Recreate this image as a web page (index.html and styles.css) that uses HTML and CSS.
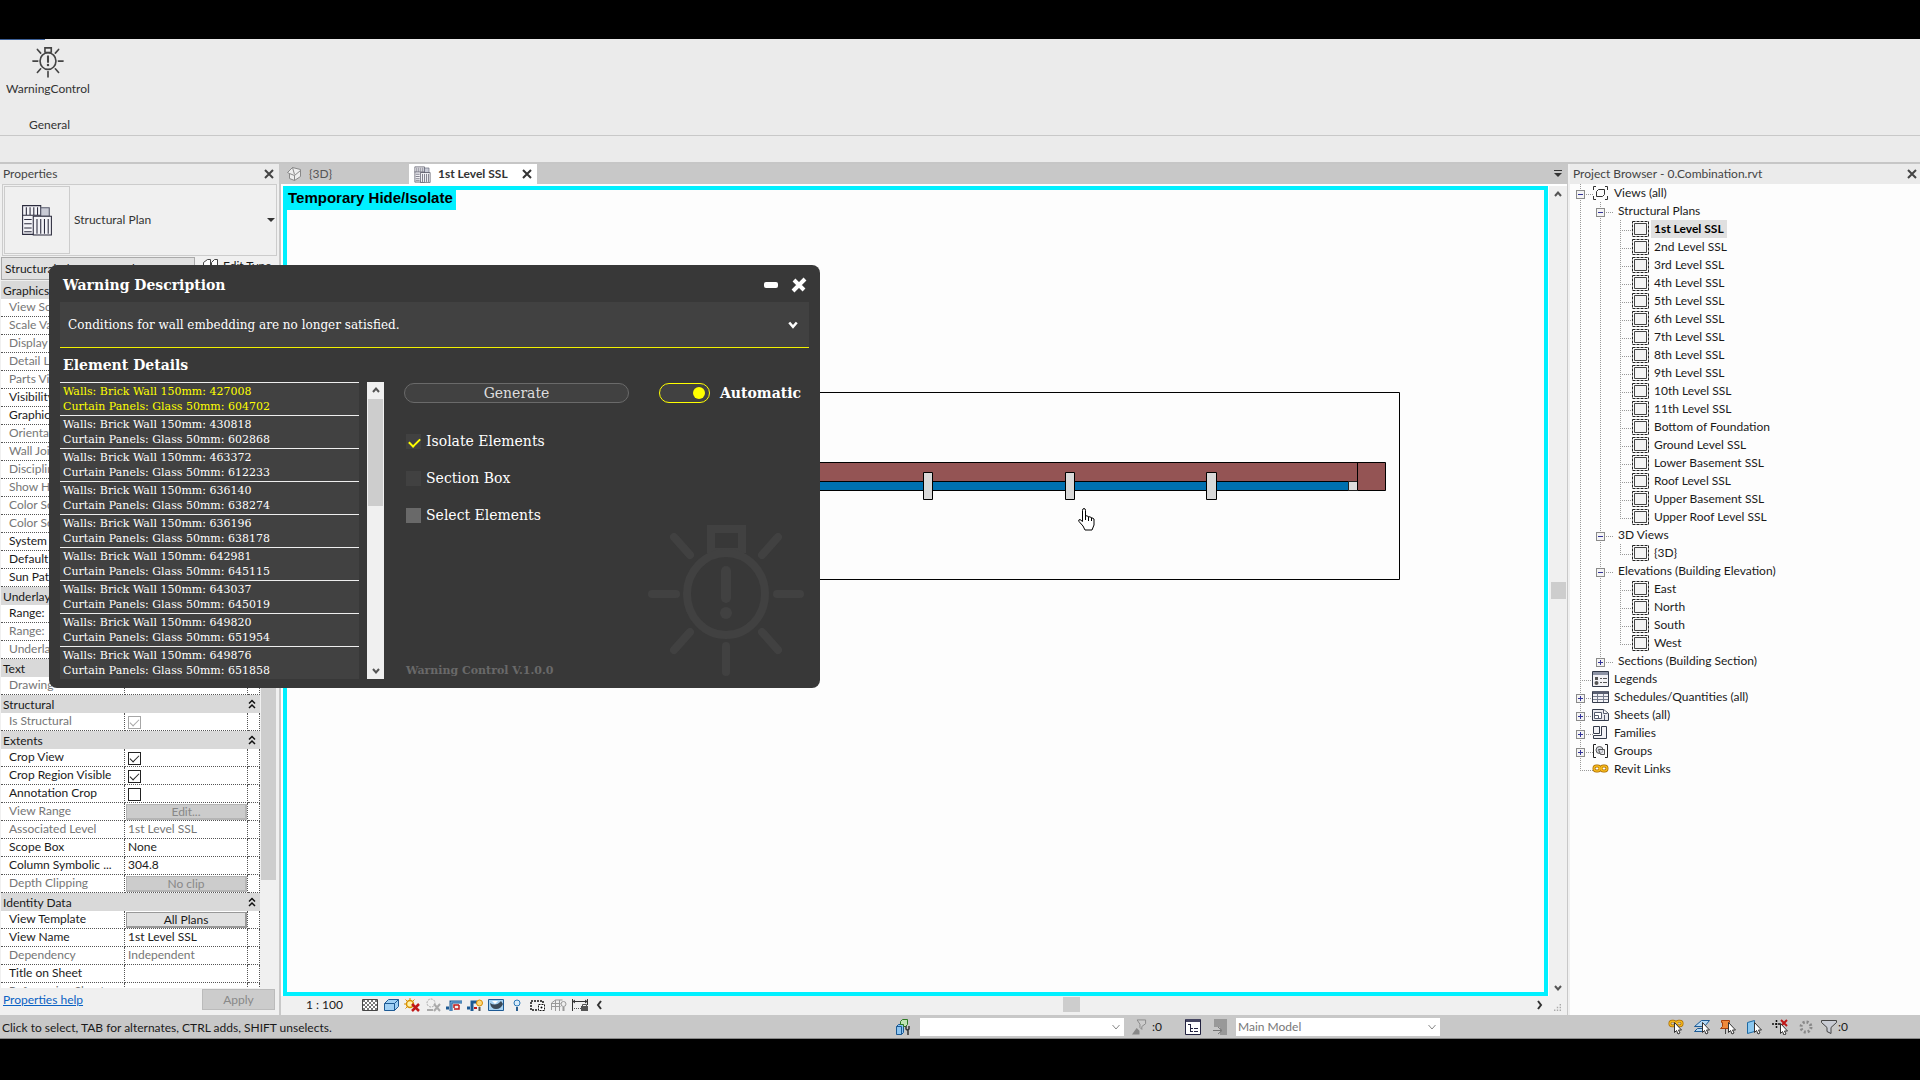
FILE: index.html
```html
<!DOCTYPE html>
<html lang="en">
<head>
  <meta charset="UTF-8" />
  <title>Warning Control</title>
  <link rel="stylesheet" href="styles.css">
</head>
<body>

  <!-- shared icons -->
  <svg class="sprite" aria-hidden="true">
    <symbol id="bulb" viewBox="0 0 156 152">
      <g fill="none" stroke="currentColor" stroke-width="8">
        <path d="M63 28V4h31v24" />
        <path d="M63 27h31" />
        <ellipse cx="78" cy="69" rx="39" ry="41" />
        <path stroke-linecap="round" d="M4 69h24M129 69h23M78 121v26M26 12l16 18M130 12l-16 18M26 125l16-18M130 125l-16-18" />
        <path stroke-width="10" stroke-linecap="round" d="M78 46v27" />
      </g>
      <circle cx="78" cy="88" r="6" fill="currentColor" />
    </symbol>
    <symbol id="plan" viewBox="0 0 28 30">
      <path fill="#f4f4f8" stroke="#2b2b3d" d="M.5 1.500h17v27H.500z" />
      <path fill="#c9cbd6" stroke="#55586a" d="M17.500 3.500h8v8h-8z" />
      <path fill="#f4f4f8" stroke="#2b2b3d" d="M10.500 11.500h17v17.500h-17z" />
      <path stroke="#2b2b3d" d="M4 3v7M7.500 3v7M11 3v7M14.500 3v7M2 14.500h7M2 18.500h7M2 22.500h7M2 26h7M0 10.500h17M14 14v14M17.500 14v14M21 14v14M24.500 14v14" />
    </symbol>
    <symbol id="view" viewBox="0 0 17 16">
      <path fill="none" stroke="#222" stroke-dasharray="3 1" d="M.5.5h16v15H.5z" />
      <path fill="#f3f3f3" stroke="#444" d="M2.500 2.500h12v11h-12z" />
    </symbol>
    <symbol id="x" viewBox="0 0 10 10">
      <path fill="none" stroke="currentColor" stroke-width="2" d="M1 1l8 8M9 1l-8 8" />
    </symbol>
    <symbol id="down" viewBox="0 0 8 8">
      <path fill="none" stroke="currentColor" stroke-width="2" d="M1 2l3 3.500 3-3.500" />
    </symbol>
    <symbol id="up" viewBox="0 0 8 8">
      <path fill="none" stroke="currentColor" stroke-width="2" d="M1 6l3-3.500 3 3.500" />
    </symbol>
    <symbol id="drop" viewBox="0 0 8 8">
      <path fill="none" stroke="#888" d="M.5 2l3.500 4 3.500-4" />
    </symbol>
    <symbol id="fold" viewBox="0 0 8 10">
      <path fill="none" stroke="#111" stroke-width="1.500" d="M1 4.500l3-3 3 3M1 9l3-3 3 3" />
    </symbol>
    <symbol id="arrow" viewBox="0 0 16 16">
      <path fill="#fff" stroke="#333" d="M6.500 3.500v10l2-2 1.500 3.500 2-1-1.500-3h3z" />
    </symbol>
    <symbol id="chain" viewBox="0 0 17 10">
      <g fill="none" stroke="#a86a00" stroke-width="3">
        <rect x="2" y="2" width="6" height="5" rx="2.500" />
        <rect x="9" y="2" width="6" height="5" rx="2.500" />
      </g>
      <g fill="none" stroke="#f5b81c" stroke-width="1.500">
        <rect x="2" y="2" width="6" height="5" rx="2.500" />
        <rect x="9" y="2" width="6" height="5" rx="2.500" />
        <path d="M6 4.500h5" />
      </g>
    </symbol>
  </svg>

  <header class="ribbon">
    <button type="button" class="ribbon-button">
      <svg class="ribbon-icon"><use href="#bulb" /></svg>
      WarningControl
    </button>
    <div class="ribbon-group">General</div>
  </header>

  <main class="workspace">

    <section class="properties">
      <div class="panel-title">
        <span>Properties</span>
        <button type="button" class="icon-button" aria-label="Close properties"><svg class="close"><use href="#x" /></svg></button>
      </div>

      <div class="type-selector">
        <div class="type-image"><svg width="30" height="32"><use href="#plan" /></svg></div>
        <span>Structural Plan</span>
        <button type="button" class="icon-button type-arrow" aria-label="Change type"></button>
      </div>

      <div class="filter-row">
        <select class="filter" aria-label="Element filter"><option>Structural Plan: 1st Level SSL</option></select>
        <button type="button" class="edit-type">
          <svg width="16" height="16" fill="#fff" stroke="#444"><path d="M1.500 4.500l4-3h3v8l-4 3h-3zM9.500 4.500l3-3h3v8l-3 3h-3z" /></svg>
          Edit Type
        </button>
      </div>

      <div class="grid-scroll">
        <table class="props">
          <colgroup><col class="name"><col class="value"><col class="extra"></colgroup>
          <tr class="group"><th colspan="2">Graphics</th><th><svg><use href="#fold" /></svg></th></tr>
          <tr class="off"><td>View Scale</td><td></td><td></td></tr>
          <tr class="off"><td>Scale Value</td><td></td><td></td></tr>
          <tr class="off"><td>Display</td><td></td><td></td></tr>
          <tr class="off"><td>Detail Level</td><td></td><td></td></tr>
          <tr class="off"><td>Parts Visibility</td><td></td><td></td></tr>
          <tr><td>Visibility</td><td></td><td></td></tr>
          <tr><td>Graphic</td><td></td><td></td></tr>
          <tr class="off"><td>Orientation</td><td></td><td></td></tr>
          <tr class="off"><td>Wall Join</td><td></td><td></td></tr>
          <tr class="off"><td>Discipline</td><td></td><td></td></tr>
          <tr class="off"><td>Show Hidden</td><td></td><td></td></tr>
          <tr class="off"><td>Color Scheme</td><td></td><td></td></tr>
          <tr class="off"><td>Color Scheme</td><td></td><td></td></tr>
          <tr><td>System</td><td></td><td></td></tr>
          <tr><td>Default</td><td></td><td></td></tr>
          <tr><td>Sun Path</td><td></td><td></td></tr>
          <tr class="group"><th colspan="2">Underlay</th><th><svg><use href="#fold" /></svg></th></tr>
          <tr><td>Range:</td><td></td><td></td></tr>
          <tr class="off"><td>Range:</td><td></td><td></td></tr>
          <tr class="off"><td>Underlay</td><td></td><td></td></tr>
          <tr class="group"><th colspan="2">Text</th><th><svg><use href="#fold" /></svg></th></tr>
          <tr class="off"><td>Drawing</td><td></td><td></td></tr>
          <tr class="group"><th colspan="2">Structural</th><th><svg><use href="#fold" /></svg></th></tr>
          <tr class="off"><td><label for="is-structural">Is Structural</label></td><td><input type="checkbox" id="is-structural" checked disabled></td><td></td></tr>
          <tr class="group"><th colspan="2">Extents</th><th><svg><use href="#fold" /></svg></th></tr>
          <tr><td><label for="crop-view">Crop View</label></td><td><input type="checkbox" id="crop-view" checked></td><td></td></tr>
          <tr><td><label for="crop-region">Crop Region Visible</label></td><td><input type="checkbox" id="crop-region" checked></td><td></td></tr>
          <tr><td><label for="annotation">Annotation Crop</label></td><td><input type="checkbox" id="annotation"></td><td></td></tr>
          <tr class="off"><td>View Range</td><td class="cell-button"><button type="button" disabled>Edit...</button></td><td></td></tr>
          <tr class="off"><td>Associated Level</td><td>1st Level SSL</td><td></td></tr>
          <tr><td>Scope Box</td><td>None</td><td></td></tr>
          <tr><td>Column Symbolic ...</td><td>304.8</td><td></td></tr>
          <tr class="off"><td>Depth Clipping</td><td class="cell-button"><button type="button" disabled>No clip</button></td><td></td></tr>
          <tr class="group"><th colspan="2">Identity Data</th><th><svg><use href="#fold" /></svg></th></tr>
          <tr><td>View Template</td><td class="cell-button"><button type="button">All Plans</button></td><td></td></tr>
          <tr><td>View Name</td><td>1st Level SSL</td><td></td></tr>
          <tr class="off"><td>Dependency</td><td>Independent</td><td></td></tr>
          <tr><td>Title on Sheet</td><td></td><td></td></tr>
          <tr class="off"><td>Referencing Sheet</td><td></td><td></td></tr>
        </table>
        <div class="scrollbar">
          <svg><use href="#up" /></svg>
          <div class="thumb props-thumb"></div>
          <svg><use href="#down" /></svg>
        </div>
      </div>

      <div class="properties-footer">
        <a href="#">Properties help</a>
        <button type="button" class="apply" disabled>Apply</button>
      </div>
    </section>

    <section class="editor">
      <nav class="tabs">
        <a href="#" class="tab">
          <svg width="16" height="16" fill="#eee" stroke="#888"><path d="M1.500 6.500l5-5 8 2v7l-6 4-5-2v-5zM3.500 7.500l5 2v5M8.500 9.500l6-5M6.500 1.500l2 7" /></svg>
          {3D}
        </a>
        <a href="#" class="tab active">
          <svg width="17" height="17"><use href="#plan" /></svg>
          1st Level SSL
          <svg class="close"><use href="#x" /></svg>
        </a>
        <button type="button" class="icon-button tab-menu" aria-label="Open views">
          <svg width="8" height="8" fill="#333"><path d="M0 0h8v1H0zM0 3h8L4 7z" /></svg>
        </button>
      </nav>

      <div class="view-area">
        <div class="view">
          <span class="mode">Temporary Hide/Isolate</span>
          <svg class="drawing" viewBox="0 0 1257 802">
            <path fill="none" stroke="#000" d="M100.500 202.500h1012v187h-1012z" />
            <path fill="#945454" stroke="#000" d="M120.500 272.500h978v28h-978z" />
            <path fill="#0070b0" stroke="#000" d="M120.500 291.500h950v9h-950z" />
            <path fill="#ddd" stroke="#222" d="M1061.500 291.500h9v9h-9z" />
            <path stroke="#000" d="M1070.500 272v28" />
            <g fill="#d9d9d9" stroke="#000">
              <path d="M636.500 282.500h9v27h-9z" />
              <path d="M778.500 282.500h9v27h-9z" />
              <path d="M919.500 282.500h10v27h-10z" />
            </g>
            <path fill="#fff" stroke="#000" d="M795.500 331.500v-11q0-2 1.500-2t1.500 2v5l3 1 3 1 2.500 1.500v6l-2 5h-7l-2-4-4-4.500q-1-2 1-2z" />
            <path stroke="#000" d="M798.500 325v5M801.500 327v4M804.500 328v3" />
          </svg>
        </div>
        <div class="scrollbar">
          <svg><use href="#up" /></svg>
          <div class="thumb view-thumb"></div>
          <svg><use href="#down" /></svg>
        </div>
      </div>

      <div class="view-bar">
        <span class="scale">1 : 100</span>
        <div class="view-icons">
          <!-- detail level -->
          <svg viewBox="0 0 16 14"><path fill="#fff" stroke="#444" d="M.5 1.500h15v11H.5z" /><path stroke="#777" stroke-dasharray="2 2" stroke-width="2" d="M1 3h14M3 5h12M1 7h14M3 9h12M1 11h14" /></svg>
          <!-- visual style -->
          <svg viewBox="0 0 16 14"><path fill="#9fd0f5" stroke="#1d5a94" d="M1.500 5.500l4-4h10v7l-4 4h-10zM1.500 5.500h10v7M11.500 5.500l4-4" /></svg>
          <!-- sun path -->
          <svg viewBox="0 0 16 14"><circle cx="6" cy="6" r="3.500" fill="#fff2a8" stroke="#d89000" stroke-width="1.500" /><path stroke="#d89000" d="M6 0v2M0 6h2M1.500 1.500l1.500 1.500M10.500 1.500l-1.500 1.500M1.500 10.500l1.500-1.500" /><path stroke="#c01818" stroke-width="2.500" d="M8 6l7 7M15 6l-7 7" /></svg>
          <!-- shadows -->
          <svg viewBox="0 0 16 14"><circle cx="6" cy="5" r="4" fill="none" stroke="#aaa" stroke-dasharray="2 1" /><path stroke="#aaa" stroke-width="2" d="M9 6l6 7M15 6l-6 7M2 12h6" /></svg>
          <!-- crop view -->
          <svg viewBox="0 0 16 14"><path fill="none" stroke="#1d5a94" stroke-width="3" d="M5 13V4h11M0 10h3" /><path fill="none" stroke="#7fb8e8" d="M5 13V4h11" /><path fill="none" stroke="#c01818" stroke-width="1.500" d="M8 10V7h5M8 11h5V7" /></svg>
          <!-- crop region -->
          <svg viewBox="0 0 16 14"><path fill="none" stroke="#1d5a94" stroke-width="3" d="M5 13V4h5M0 10h3" /><path stroke="#c01818" stroke-width="2" d="M7 10h3" /><circle cx="12.500" cy="5" r="3" fill="#ffd978" stroke="#d88a00" /><path stroke="#555" stroke-width="2" d="M12.500 9v4" /></svg>
          <!-- render -->
          <svg viewBox="0 0 16 14"><path fill="#a8d2f2" stroke="#1d5a94" d="M.5 1.500h15v11H.5z" /><path fill="#3c4a58" d="M2 5q6 4 11-2l2 3q-2 5-7 5T2 5z" /><path fill="#fff" d="M4 3h6l-3 3z" /></svg>
          <!-- reveal hidden -->
          <svg viewBox="0 0 16 14"><circle cx="8" cy="5" r="3" fill="#d8ecfb" stroke="#2a78b8" /><path stroke="#2a5f90" stroke-width="2" d="M8 9v4" /></svg>
          <!-- temporary hide -->
          <svg viewBox="0 0 16 14"><path fill="none" stroke="#111" stroke-width="1.500" stroke-dasharray="2 1" d="M7 12H1V3h12v3" /><rect x="8.500" y="6.500" width="6" height="6" fill="#fff" stroke="#111" stroke-dasharray="2 1" /><circle cx="11.500" cy="9.500" r="1" /></svg>
          <!-- analytical model -->
          <svg viewBox="0 0 16 14"><path fill="none" stroke="#999" d="M.5 12V5l4-3h7M.5 5.500h9M.5 8.500h9M4.500 2v11M8.500 2v11" /><circle cx="12.500" cy="6" r="2.500" fill="#eee" stroke="#999" /><path stroke="#999" stroke-width="2" d="M12.500 9v4" /></svg>
          <!-- constraints -->
          <svg viewBox="0 0 16 14"><path fill="none" stroke="#333" d="M.5 1v12M15.500 1v6M1 3.500h14M3 2L1 3.500 3 5M13 2l2 1.500L13 5" /><path stroke="#555" stroke-dasharray="1 1" d="M2 10.500h7" /><path fill="#555" d="M9 8h7v5H9z" /><path fill="none" stroke="#555" d="M10.500 8V6.500h4V8" /></svg>
          <svg viewBox="0 0 16 14"><path fill="none" stroke="#333" stroke-width="2" d="M8 3L5 7l3 4" /></svg>
        </div>
        <div class="h-scroll">
          <div class="thumb h-thumb"></div>
        </div>
        <svg class="h-arrow" viewBox="0 0 8 10"><path fill="none" stroke="#333" stroke-width="2" d="M2 1l3 4-3 4" /></svg>
        <svg class="grip" viewBox="0 0 10 10"><path fill="#aaa" d="M8 0h2v2H8zM4 4h2v2H4zM8 4h2v2H8zM0 8h2v2H0zM4 8h2v2H4zM8 8h2v2H8z" /></svg>
      </div>
    </section>

    <section class="browser">
      <div class="panel-title">
        <span>Project Browser - 0.Combination.rvt</span>
        <button type="button" class="icon-button" aria-label="Close project browser"><svg class="close"><use href="#x" /></svg></button>
      </div>
      <ul class="tree">
        <li>
          <div class="node"><button type="button" class="toggle" aria-label="Collapse"></button>
            <svg viewBox="0 0 17 16" fill="none" stroke="#333"><path d="M4 1.500H1.500V5M13 1.500h2.500V5M4 14.500H1.500V11M13 14.500h2.500V11" /><path d="M4.500 6.500l2-2h6v5l-2 2h-6z" /></svg>
            <span>Views (all)</span></div>
          <ul>
            <li>
              <div class="node"><button type="button" class="toggle" aria-label="Collapse"></button><span>Structural Plans</span></div>
              <ul class="views">
                <li><svg><use href="#view" /></svg><span class="current">1st Level SSL</span></li>
                <li><svg><use href="#view" /></svg><span>2nd Level SSL</span></li>
                <li><svg><use href="#view" /></svg><span>3rd Level SSL</span></li>
                <li><svg><use href="#view" /></svg><span>4th Level SSL</span></li>
                <li><svg><use href="#view" /></svg><span>5th Level SSL</span></li>
                <li><svg><use href="#view" /></svg><span>6th Level SSL</span></li>
                <li><svg><use href="#view" /></svg><span>7th Level SSL</span></li>
                <li><svg><use href="#view" /></svg><span>8th Level SSL</span></li>
                <li><svg><use href="#view" /></svg><span>9th Level SSL</span></li>
                <li><svg><use href="#view" /></svg><span>10th Level SSL</span></li>
                <li><svg><use href="#view" /></svg><span>11th Level SSL</span></li>
                <li><svg><use href="#view" /></svg><span>Bottom of Foundation</span></li>
                <li><svg><use href="#view" /></svg><span>Ground Level SSL</span></li>
                <li><svg><use href="#view" /></svg><span>Lower Basement SSL</span></li>
                <li><svg><use href="#view" /></svg><span>Roof Level SSL</span></li>
                <li><svg><use href="#view" /></svg><span>Upper Basement SSL</span></li>
                <li><svg><use href="#view" /></svg><span>Upper Roof Level SSL</span></li>
              </ul>
            </li>
            <li>
              <div class="node"><button type="button" class="toggle" aria-label="Collapse"></button><span>3D Views</span></div>
              <ul class="views">
                <li><svg><use href="#view" /></svg><span>{3D}</span></li>
              </ul>
            </li>
            <li>
              <div class="node"><button type="button" class="toggle" aria-label="Collapse"></button><span>Elevations (Building Elevation)</span></div>
              <ul class="views">
                <li><svg><use href="#view" /></svg><span>East</span></li>
                <li><svg><use href="#view" /></svg><span>North</span></li>
                <li><svg><use href="#view" /></svg><span>South</span></li>
                <li><svg><use href="#view" /></svg><span>West</span></li>
              </ul>
            </li>
            <li>
              <div class="node"><button type="button" class="toggle closed" aria-label="Expand"></button><span>Sections (Building Section)</span></div>
            </li>
          </ul>
        </li>
        <li>
          <div class="node leaf">
            <svg viewBox="0 0 17 16"><path fill="#f2f2f6" stroke="#333a4a" d="M.5.5h16v15H.5z" /><path fill="#8d93a5" d="M1 1h15v3H1z" /><path fill="#555" d="M3 6h3v3H3zM8 7h2v1H8zM11 7h4v1h-4zM8 11h2v1H8zM11 11h4v1h-4z" /><circle cx="4.500" cy="12" r="2" fill="#555" /></svg>
            <span>Legends</span></div>
        </li>
        <li>
          <div class="node"><button type="button" class="toggle closed" aria-label="Expand"></button>
            <svg viewBox="0 0 17 16"><path fill="#f2f2f6" stroke="#333a4a" d="M.5 2.500h16v11H.5z" /><path fill="#5a6072" d="M1 2h15v3H1z" /><path stroke="#777d8e" d="M1 7.500h15M1 10.500h15M5.500 5v8M11.500 5v8" /></svg>
            <span>Schedules/Quantities (all)</span></div>
        </li>
        <li>
          <div class="node"><button type="button" class="toggle closed" aria-label="Expand"></button>
            <svg viewBox="0 0 17 16"><path fill="#e9eaf0" stroke="#333a4a" d="M.5 2.500h11l5 4v7H.5z" /><path fill="#fff" stroke="#555b6e" d="M2.500 5.500h7v6h-7zM2.500 8.500h4v3M11.500 2.500v4h4M12.500 8v5" /></svg>
            <span>Sheets (all)</span></div>
        </li>
        <li>
          <div class="node"><button type="button" class="toggle closed" aria-label="Expand"></button>
            <svg viewBox="0 0 17 16"><path fill="#f2f2f6" stroke="#333a4a" d="M1.500 1.500h6v7h-6zM9.500 1.500h5v12h-13v-3h8z" /></svg>
            <span>Families</span></div>
        </li>
        <li>
          <div class="node"><button type="button" class="toggle closed" aria-label="Expand"></button>
            <svg viewBox="0 0 17 16"><path fill="none" stroke="#222" d="M4 1.500H1.500v13H4M13 1.500h2.500v13H13" /><circle cx="7.500" cy="7" r="3.500" fill="#d5d8e0" stroke="#555" /><path fill="#e8eaf0" fill-opacity=".6" stroke="#555" d="M6.500 6.500h6v5h-4z" /></svg>
            <span>Groups</span></div>
        </li>
        <li>
          <div class="node leaf">
            <svg viewBox="0 -3 17 16"><use href="#chain" width="17" height="10" /></svg>
            <span>Revit Links</span></div>
        </li>
      </ul>
    </section>
  </main>

  <footer class="status">
    <span class="hint">Click to select, TAB for alternates, CTRL adds, SHIFT unselects.</span>
    <div class="status-middle">
      <svg viewBox="0 0 16 18"><path fill="#8cc4f0" stroke="#1d5a94" d="M.5 8.500l2-2h5v8l-2 2h-5zM.5 8.500h5v8" /><path fill="#bfe3b4" stroke="#2d7a22" d="M4.500 3.500l2-2h5v5l-2 2h-2v-2h-3z" /><path fill="none" stroke="#333" stroke-width="1.500" d="M10 8v3q1 2 3 0V8M12 12v5" /></svg>
      <div class="status-select">
        <select aria-label="Active workset"><option></option></select>
        <svg><use href="#drop" /></svg>
      </div>
      <svg viewBox="0 0 17 18"><path fill="#ccc" stroke="#888" d="M6.500 1.500h9v4l-4 3v3l-2-2V6z" /><path fill="#888" d="M1 17l5-7 3 3v4z" /></svg>
      <span class="count">:0</span>
      <svg class="option-icon" viewBox="0 0 16 18"><path fill="#fff" stroke="#222240" d="M.5 1.500h15v15H.5z" /><path fill="#444460" d="M1 1h14v3H1z" /><path stroke="#222240" d="M3 6.500h3M5.500 7v7M6 10.500h2M6 13.500h2M9 10.500h4M9 13.500h4" /></svg>
      <svg viewBox="0 0 16 18"><path fill="#999" d="M2 1h13v16H8V9H2z" /><path fill="none" stroke="#777" d="M1 12.500h8M6 9l4 3.500L6 16" /></svg>
      <div class="status-select">
        <select aria-label="Design option"><option>Main Model</option></select>
        <svg><use href="#drop" /></svg>
      </div>
    </div>
    <div class="status-right">
      <svg viewBox="0 0 16 16"><use href="#chain" width="16" height="10" /><use href="#arrow" width="16" height="16" /></svg>
      <svg viewBox="0 0 16 16"><path fill="#b5d9f5" stroke="#1d5a94" d="M.5 7.500l7-6h8l-5 6zM.5 12.500l3-3h9l-3 3z" /><use href="#arrow" x="2" width="16" height="16" /></svg>
      <svg viewBox="0 0 16 16"><path fill="#f08a3c" stroke="#a8400c" d="M1.500 1.500h8v2h-1v4l2 2h-10l2-2v-4h-1z" /><path stroke="#444" d="M5.500 10v5" /><use href="#arrow" x="2" width="16" height="16" /></svg>
      <svg viewBox="0 0 16 16"><path fill="#8cc8f0" stroke="#1d6aa4" d="M1.500 3.500l7-2v11l-7 2z" /><use href="#arrow" x="2" width="16" height="16" /></svg>
      <svg viewBox="0 0 16 16"><path stroke="#111" stroke-width="1.500" stroke-dasharray="2 1" d="M0 5h9M4.500 1v8" /><path stroke="#c01818" stroke-width="2" d="M9 1l6 6M15 1L9 7" /><use href="#arrow" x="2" y="1" width="16" height="16" /></svg>
      <svg viewBox="0 0 16 16"><circle cx="8" cy="8" r="5" fill="none" stroke="#888" stroke-width="3" stroke-dasharray="2 1.920" /></svg>
      <span class="filter-count">
        <svg viewBox="0 0 16 16"><path fill="#c9ccd4" stroke="#444" d="M.5 1.500h15v2l-5.500 5v6l-4-2v-4L.5 3.500z" /></svg>:0
      </span>
    </div>
  </footer>

  <section class="dialog" role="dialog" aria-label="Warning Description">
    <div class="dialog-head">
      <h2>Warning Description</h2>
      <button type="button" class="icon-button" aria-label="Minimize"><svg width="14" height="18"><rect y="7" width="14" height="6" rx="2" fill="#fff" /></svg></button>
      <button type="button" class="icon-button" aria-label="Close"><svg width="16" height="18"><path stroke="#fff" stroke-width="4" d="M2 16L14 4M3 5l10 10" /></svg></button>
    </div>

    <div class="warning-select">
      <select aria-label="Warning"><option>Conditions for wall embedding are no longer satisfied.</option></select>
      <svg><use href="#down" /></svg>
    </div>

    <div class="dialog-body">
      <h2 class="list-title">Element Details</h2>
      <div class="list-box">
        <ul class="elements">
          <li class="selected">Walls: Brick Wall 150mm: 427008<br>Curtain Panels: Glass 50mm: 604702</li>
          <li>Walls: Brick Wall 150mm: 430818<br>Curtain Panels: Glass 50mm: 602868</li>
          <li>Walls: Brick Wall 150mm: 463372<br>Curtain Panels: Glass 50mm: 612233</li>
          <li>Walls: Brick Wall 150mm: 636140<br>Curtain Panels: Glass 50mm: 638274</li>
          <li>Walls: Brick Wall 150mm: 636196<br>Curtain Panels: Glass 50mm: 638178</li>
          <li>Walls: Brick Wall 150mm: 642981<br>Curtain Panels: Glass 50mm: 645115</li>
          <li>Walls: Brick Wall 150mm: 643037<br>Curtain Panels: Glass 50mm: 645019</li>
          <li>Walls: Brick Wall 150mm: 649820<br>Curtain Panels: Glass 50mm: 651954</li>
          <li>Walls: Brick Wall 150mm: 649876<br>Curtain Panels: Glass 50mm: 651858</li>
        </ul>
        <div class="scrollbar">
          <svg><use href="#up" /></svg>
          <div class="thumb list-thumb"></div>
          <svg><use href="#down" /></svg>
        </div>
      </div>

      <div class="controls">
        <div class="run-row">
          <button type="button" class="generate">Generate</button>
          <input type="checkbox" class="switch" id="automatic" checked>
          <label for="automatic">Automatic</label>
        </div>
        <div class="options">
          <label><input type="checkbox" checked> Isolate Elements</label>
          <label><input type="checkbox"> Section Box</label>
          <label><input type="checkbox" class="light"> Select Elements</label>
        </div>
        <div class="about">
          <span>Warning Control V.1.0.0</span>
          <svg class="watermark"><use href="#bulb" /></svg>
        </div>
      </div>
    </div>
  </section>

</body>
</html>
```
FILE: styles.css
```css
* {
  box-sizing: border-box;
}

body {
  margin: 0;
  height: 100vh;
  padding: 39px 0 41px;
  display: flex;
  flex-direction: column;
  overflow: hidden;
  background: #000;
  color: #1a1a1a;
  font: 12px/18px Lato, "Open Sans", sans-serif;
}

ul {
  list-style: none;
  margin: 0;
  padding: 0;
}

button,
select,
input {
  margin: 0;
  padding: 0;
  border: 0;
  border-radius: 0;
  background: none;
  color: inherit;
  font: inherit;
}

select,
input[type="checkbox"] {
  appearance: none;
}

svg {
  display: block;
  flex: none;
}

.sprite {
  position: absolute;
  width: 0;
  height: 0;
}

.icon-button {
  display: flex;
  align-items: center;
  justify-content: center;
}

.close {
  width: 10px;
  height: 10px;
}

/* ribbon */
.ribbon {
  height: 125px;
  background: linear-gradient(#3c5f96, #3c5f96) 0 0 / 45px 1px no-repeat, #ebebeb;
  border-bottom: 2px solid #c6c6c6;
}

.ribbon-button {
  display: flex;
  flex-direction: column;
  align-items: center;
  gap: 2px;
  padding: 8px 6px 0;
  color: #333;
}

.ribbon-icon {
  width: 32px;
  height: 31px;
  color: #444;
}

.ribbon-group {
  width: 100%;
  padding: 18px 29px 1px;
  border-bottom: 1px solid #c8c8c8;
  color: #333;
}

/* workspace */
.workspace {
  flex: 1;
  min-height: 0;
  display: grid;
  grid-template-columns: 281px 1fr 353px;
  background: #c8c8c8;
}

.panel-title {
  height: 20px;
  padding: 0 3px;
  display: flex;
  justify-content: space-between;
  align-items: center;
  background: #ebebeb;
  color: #444;
}

.properties {
  display: flex;
  flex-direction: column;
  min-height: 0;
  background: #f0f0f0;
  border-right: 2px solid #c8c8c8;
}

.properties .panel-title {
  padding-right: 5px;
}

.type-selector {
  height: 72px;
  margin: 0 2px 1px;
  border: 1px solid #ccc;
  display: flex;
  align-items: center;
  color: #333;
}

.type-image {
  width: 66px;
  height: 68px;
  margin: 0 4px 0 1px;
  border: 1px solid #ccc;
  display: flex;
  align-items: center;
  justify-content: center;
}

.type-arrow {
  margin: 0 1px 0 auto;
  border: 4px solid transparent;
  border-top-color: #333;
  border-bottom: 0;
}

.filter-row {
  height: 24px;
  display: flex;
  align-items: flex-start;
}

.filter {
  width: 194px;
  height: 23px;
  margin-left: 1px;
  padding-left: 3px;
  border: 1px solid #aaa;
  background: #e1e1e1;
}

.edit-type {
  display: flex;
  align-items: center;
  gap: 5px;
  margin-left: 7px;
}

.grid-scroll {
  flex: 1;
  min-height: 0;
  overflow: hidden;
  display: grid;
  grid-template-columns: 259px 17px;
  padding-left: 1px;
}

.props {
  width: 100%;
  align-self: start;
  table-layout: fixed;
  border-collapse: separate;
  border-spacing: 0;
  background: #fff;
  line-height: 16px;
}

.props .name { width: 124px; }
.props .extra { width: 12px; }

.props td,
.props th {
  height: 18px;
  padding: 0 0 1px 3px;
  overflow: hidden;
  text-align: left;
  font-weight: normal;
  white-space: nowrap;
}

.props td {
  border-bottom: 1px dotted #555;
  border-right: 1px dotted #555;
}

.props td:first-child {
  padding-left: 8px;
}

.props .group {
  background: #d9d9d9;
}

.props th:first-child {
  padding: 1px 0 0 2px;
}

.props th:last-child {
  padding: 0;
}

.props th svg {
  width: 8px;
  height: 10px;
}

.props .off {
  color: #767676;
}

.props input {
  display: block;
  width: 13px;
  height: 13px;
  margin-top: 2px;
  border: 1px solid #222;
  background: #fff;
}

.props input:checked::before {
  content: "";
  display: block;
  width: 8px;
  height: 4px;
  margin: 2px 1px;
  border: solid #222;
  border-width: 0 0 1px 1px;
  transform: rotate(-45deg);
}

.props input:disabled {
  opacity: 0.4;
}

.props .cell-button {
  padding: 0 0 0 1px;
}

.props td button {
  display: block;
  width: 100%;
  height: 16px;
  border: 1px solid #999;
  border-width: 1px 2px 2px 1px;
  background: #e1e1e1;
  line-height: 13px;
}

.props td button:disabled {
  border-color: #b5b5b5;
  background: #ccc;
  color: #888;
}

.properties-footer {
  height: 27px;
  padding: 1px 4px 5px 3px;
  display: flex;
  justify-content: space-between;
  align-items: center;
}

.properties-footer a {
  color: #0a62c4;
}

.apply {
  width: 73px;
  height: 21px;
  border: 1px solid #bbb;
  background: #ccc;
  color: #888;
}

/* scrollbars */
.scrollbar {
  min-height: 0;
  display: flex;
  flex-direction: column;
  align-items: center;
  padding: 4px 0;
  background: #f0f0f0;
  color: #555;
}

.scrollbar svg {
  width: 8px;
  height: 8px;
}

.scrollbar svg:last-child {
  margin-top: auto;
}

.thumb {
  width: 15px;
  background: #cdcdcd;
}

.props-thumb {
  height: 583px;
  margin-top: 4px;
}

.view-thumb {
  height: 17px;
  margin-top: 384px;
}

.list-thumb {
  height: 107px;
  margin-top: 5px;
}

/* editor */
.editor {
  display: flex;
  flex-direction: column;
  min-width: 0;
  min-height: 0;
}

.tabs {
  height: 20px;
  display: flex;
}

.tab {
  width: 128px;
  padding: 0 5px;
  display: flex;
  align-items: center;
  gap: 7px;
  color: #555;
  text-decoration: none;
}

.tab.active {
  background: #fff;
  color: #333;
  font-weight: bold;
}

.tab .close {
  margin-left: auto;
}

.tab-menu {
  margin: 0 5px 0 auto;
}

.view-area {
  flex: 1;
  min-height: 0;
  display: grid;
  grid-template-columns: 1fr 18px;
  column-gap: 1px;
  padding: 2px 0 0 2px;
  background: #fff;
}

.view {
  position: relative;
  min-height: 0;
  border: 4px solid #00f0ff;
  background: #fdfdfd;
  overflow: hidden;
}

.mode {
  position: absolute;
  left: 0;
  top: 0;
  padding: 0 3px 4px 1px;
  background: #00f0ff;
  color: #000;
  font: bold 15px/16px "Liberation Sans", Arial, sans-serif;
}

.drawing {
  width: 100%;
  height: 100%;
}

.view-bar {
  height: 19px;
  padding: 0 6px 2px 25px;
  display: flex;
  align-items: center;
  background: #f0f0f0;
}

.scale {
  width: 56px;
}

.view-icons {
  display: flex;
  gap: 5px;
}

.view-icons svg {
  width: 16px;
  height: 14px;
}

.h-scroll {
  flex: 1;
  height: 15px;
  display: flex;
}

.h-thumb {
  width: 17px;
  margin-left: 49%;
}

.h-arrow {
  width: 8px;
  height: 10px;
}

.grip {
  width: 7px;
  height: 7px;
  margin: 6px 0 0 10px;
}

/* project browser */
.browser {
  margin-left: 1px;
  border-left: 2px solid #f0f0f0;
  background: #fdfdfd;
}

.tree li {
  background:
    repeating-linear-gradient(#999 0 1px, transparent 1px 2px) 10px 0 / 1px 100% no-repeat,
    repeating-linear-gradient(90deg, #999 0 1px, transparent 1px 2px) 10px 10px / 14px 1px no-repeat;
}

.tree li:last-child {
  background-size: 1px 11px, 14px 1px;
}

.tree ul {
  margin-left: 20px;
}

.tree svg {
  width: 17px;
  height: 16px;
  margin-right: 5px;
}

.node,
.views li {
  height: 18px;
  display: flex;
  align-items: center;
  padding-left: 6px;
}

.node .toggle {
  width: 9px;
  height: 9px;
  margin: 2px 7px 0 0;
  border: 1px solid #8a8a8a;
  background:
    linear-gradient(#339, #339) center / 5px 1px no-repeat,
    #f4f4f4;
}

.node .toggle.closed {
  background:
    linear-gradient(#339, #339) center / 5px 1px no-repeat,
    linear-gradient(#339, #339) center / 1px 5px no-repeat,
    #f4f4f4;
}

.node .toggle + span {
  margin-left: 6px;
}

.node.leaf,
.views li {
  padding-left: 22px;
}

.views span {
  padding-right: 3px;
}

.views .current {
  margin-left: -3px;
  padding-left: 3px;
  background: #e0e0e0;
  color: #000;
  font-weight: bold;
}

/* status bar */
.status {
  height: 24px;
  display: grid;
  grid-template-columns: 7fr 6fr 2fr;
  align-items: center;
  background: #c8c8c8;
  border-bottom: 1px solid #888;
}

.hint {
  padding: 2px 0 0 2px;
}

.status-middle,
.status-right,
.filter-count {
  display: flex;
  align-items: center;
}

.status-middle > svg {
  width: 16px;
  height: 18px;
}

.status-select {
  width: 204px;
  margin: 0 7px 0 8px;
  display: grid;
  align-items: center;
  background: #fff;
  color: #777;
}

.status-select select,
.status-select svg {
  grid-area: 1 / 1;
}

.status-select select {
  height: 18px;
  padding-left: 2px;
}

.status-select svg {
  justify-self: end;
  width: 8px;
  height: 8px;
  margin-right: 4px;
  pointer-events: none;
}

.count {
  width: 33px;
  margin-left: 5px;
}

.option-icon {
  margin-right: 11px;
}

.status-right {
  gap: 10px;
  padding-left: 4px;
}

.status-right svg {
  width: 16px;
  height: 16px;
}

.filter-count {
  margin-left: -3px;
  gap: 1px;
}

/* warning dialog */
.dialog {
  position: absolute;
  left: 49px;
  top: 265px;
  width: 771px;
  padding: 9px 11px;
  border-radius: 8px;
  background: #383838;
  color: #fff;
  font-family: "DejaVu Serif", serif;
}

.dialog h2 {
  margin: 0;
  padding-left: 3px;
  font-size: 14px;
  line-height: 20px;
}

.dialog-head {
  height: 28px;
  display: flex;
  align-items: flex-start;
  gap: 13px;
  padding: 1px 2px 0 0;
}

.dialog-head h2 {
  margin-right: auto;
}

.warning-select {
  display: grid;
  align-items: center;
  height: 46px;
  border-bottom: 1px solid #f0f000;
  background: #414141;
}

.warning-select select,
.warning-select svg {
  grid-area: 1 / 1;
}

.warning-select select {
  height: 45px;
  padding-left: 8px;
}

.warning-select svg {
  justify-self: end;
  width: 10px;
  height: 10px;
  margin-right: 11px;
  pointer-events: none;
}

.dialog-body {
  display: grid;
  grid-template-columns: 324px 1fr;
  column-gap: 20px;
}

.list-title {
  grid-column: 1 / -1;
}

.dialog .list-title {
  padding: 7px 3px;
}

.list-box {
  display: grid;
  grid-template-columns: 1fr 17px;
  column-gap: 8px;
}

.elements {
  background: #414141;
  font-size: 11px;
  line-height: 15px;
}

.elements li {
  padding: 1px 3px;
  border-top: 1px solid #eee;
}

.elements .selected {
  color: #ff0;
}

.controls {
  display: flex;
  flex-direction: column;
  font-size: 14px;
}

.run-row {
  display: flex;
  align-items: center;
  padding-top: 1px;
}

.generate {
  width: 225px;
  height: 20px;
  margin-right: 30px;
  border: 1px solid #6a6a6a;
  border-radius: 10px;
  background: #414141;
  color: #ddd;
  line-height: 18px;
}

.switch {
  width: 51px;
  height: 20px;
  padding: 3px 4px;
  margin-right: 10px;
  border: 1px solid #ff0;
  border-radius: 10px;
  background: #414141;
}

.switch:checked::before {
  content: "";
  display: block;
  width: 12px;
  height: 12px;
  margin-left: auto;
  border-radius: 50%;
  background: #ff0;
}

.run-row label {
  font-weight: bold;
}

.options {
  display: grid;
  gap: 19px;
  padding: 29px 2px 0;
}

.options label {
  display: flex;
  align-items: center;
  gap: 5px;
}

.options input {
  width: 15px;
  height: 15px;
  background: #414141;
}

.options input.light {
  background: #696969;
}

.options input:checked::before {
  content: "";
  display: block;
  width: 9px;
  height: 5px;
  margin: 4px 3px;
  border: solid #ff0;
  border-width: 0 0 2px 2px;
  transform: rotate(-45deg);
}

.about {
  margin-top: auto;
  padding: 0 5px 2px 2px;
  display: flex;
  justify-content: space-between;
  align-items: flex-end;
  color: #696969;
  font-size: 11px;
  font-weight: bold;
  line-height: 12px;
}

.watermark {
  width: 156px;
  height: 152px;
  color: #414141;
}
```
